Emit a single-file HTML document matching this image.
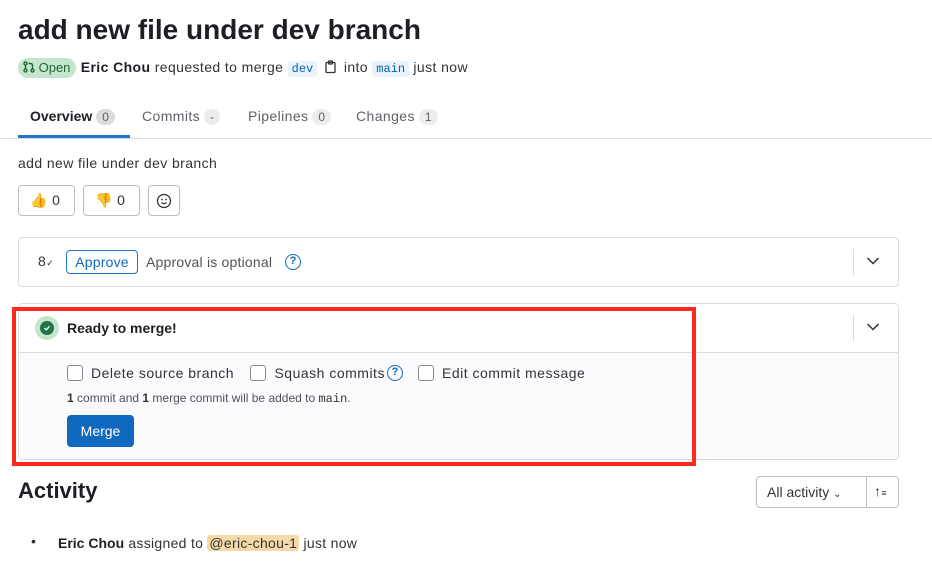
<!DOCTYPE html>
<html><head><meta charset="utf-8"><style>
*{box-sizing:border-box;margin:0;padding:0}
body{width:932px;height:570px;overflow:hidden;background:#fff;font-family:"Liberation Sans",sans-serif;color:#333238;position:relative;letter-spacing:0.4px}
.a{position:absolute}
.mono{font-family:"Liberation Mono",monospace;letter-spacing:0}
.badge{display:inline-block;background:#ececef;border-radius:10px;font-size:12px;padding:1px 6px;color:#626168;margin-left:4px;letter-spacing:0}
.cb{display:inline-block;width:16px;height:16px;border:1px solid #89888d;border-radius:3px;background:#fff;vertical-align:-3px;margin-right:8px}
.q{display:inline-block;width:16px;height:16px;border:1.5px solid #1068bf;border-radius:50%;color:#1068bf;font-size:11px;text-align:center;line-height:13px;font-weight:bold;letter-spacing:0}
</style></head><body>
<div class="a" style="left:18px;top:14px;font-size:28px;font-weight:bold;color:#1f1e24;letter-spacing:0">add new file under dev branch</div>
<div class="a" style="left:18px;top:57px;font-size:14px;white-space:nowrap;line-height:20px">
<span style="display:inline-block;background:#c3e6cd;color:#24663b;border-radius:10px;padding:0 6px 0 5px;font-size:13px;letter-spacing:0">
<svg width="12" height="12" viewBox="0 0 12 12" style="vertical-align:-1px"><g fill="none" stroke="#24663b" stroke-width="1.4"><circle cx="2.5" cy="2.5" r="1.5"/><circle cx="2.5" cy="9.5" r="1.5"/><circle cx="9.5" cy="9.5" r="1.5"/><path d="M2.5 4v4M9.5 8V4.5C9.5 3 8.5 2.5 7 2.5H5.5"/></g></svg> Open</span>
<b style="color:#1f1e24">Eric Chou</b> requested to merge <span class="mono" style="background:#e9f3fc;color:#0b5cad;font-size:12px;padding:1px 4px;border-radius:3px">dev</span>
<svg width="14" height="14" viewBox="0 0 14 14" style="vertical-align:-2px;margin:0 2px"><g fill="none" stroke="#333" stroke-width="1.3"><rect x="2" y="2.5" width="9" height="10" rx="1"/><rect x="4.5" y="1" width="4" height="3" rx="0.5"/></g></svg>
into <span class="mono" style="background:#e9f3fc;color:#0b5cad;font-size:12px;padding:1px 4px;border-radius:3px">main</span> just now</div>
<div class="a" style="left:0;top:138px;width:932px;height:1px;background:#dcdcde"></div>
<div class="a" style="left:18px;top:135px;width:112px;height:3px;background:#1f75cb"></div>
<div class="a" style="left:30px;top:108px;font-size:14px;color:#1f1e24;font-weight:bold;letter-spacing:0">Overview<span class="badge" style="font-weight:normal;background:#dcdcde">0</span></div>
<div class="a" style="left:142px;top:108px;font-size:14px;color:#626168">Commits<span class="badge">-</span></div>
<div class="a" style="left:248px;top:108px;font-size:14px;color:#626168">Pipelines<span class="badge">0</span></div>
<div class="a" style="left:356px;top:108px;font-size:14px;color:#626168">Changes<span class="badge">1</span></div>
<div class="a" style="left:18px;top:155px;font-size:14px">add new file under dev branch</div>
<div class="a" style="left:18px;top:185px;width:57px;height:31px;border:1px solid #bfbfc3;border-radius:4px;font-size:14px;padding:6px 0 0 11px">👍 0</div>
<div class="a" style="left:83px;top:185px;width:57px;height:31px;border:1px solid #bfbfc3;border-radius:4px;font-size:14px;padding:6px 0 0 11px">👎 0</div>
<div class="a" style="left:148px;top:185px;width:32px;height:31px;border:1px solid #bfbfc3;border-radius:4px">
<svg class="a" style="left:7px;top:7px" width="16" height="16" viewBox="0 0 16 16"><g fill="none" stroke="#333" stroke-width="1.3"><circle cx="8" cy="8" r="6.5"/><path d="M5.5 9.5c1.3 1.5 3.7 1.5 5 0"/></g><circle cx="6" cy="6.5" r="0.9" fill="#333"/><circle cx="10" cy="6.5" r="0.9" fill="#333"/></svg></div>
<div class="a" style="left:18px;top:237px;width:881px;height:50px;border:1px solid #dcdcde;border-radius:4px"></div>
<div class="a" style="left:38px;top:253px;font-size:14px">8<span style="font-size:9px">✓</span></div>
<div class="a" style="left:66px;top:250px;width:72px;height:24px;border:1px solid #1f75cb;border-radius:4px;color:#1068bf;font-size:14px;text-align:center;line-height:22px;letter-spacing:0.2px">Approve</div>
<div class="a" style="left:146px;top:254px;font-size:14px;color:#535158;letter-spacing:0.2px">Approval is optional</div>
<div class="a q" style="left:285px;top:254px">?</div>
<div class="a" style="left:853px;top:249px;width:1px;height:26px;background:#dcdcde"></div>
<svg class="a" style="left:866px;top:256px" width="14" height="10" viewBox="0 0 14 10"><path d="M1.5 2l5.5 5.5L12.5 2" fill="none" stroke="#333" stroke-width="1.5"/></svg>
<div class="a" style="left:18px;top:303px;width:881px;height:157px;border:1px solid #dcdcde;border-radius:4px;overflow:hidden">
<div class="a" style="left:0;top:48px;width:881px;height:109px;background:#fbfafd;border-top:1px solid #dcdcde"></div></div>
<div class="a" style="left:35px;top:316px;width:24px;height:24px;border-radius:50%;background:#c3e6cd"></div>
<div class="a" style="left:40px;top:321px;width:14px;height:14px;border-radius:50%;background:#217645"></div>
<svg class="a" style="left:43px;top:324px" width="8" height="8" viewBox="0 0 8 8"><path d="M1.5 4l1.8 1.8L6.5 2.3" fill="none" stroke="#fff" stroke-width="1.3"/></svg>
<div class="a" style="left:67px;top:320px;font-size:14px;font-weight:bold;color:#1f1e24;letter-spacing:0">Ready to merge!</div>
<div class="a" style="left:853px;top:315px;width:1px;height:26px;background:#dcdcde"></div>
<svg class="a" style="left:866px;top:322px" width="14" height="10" viewBox="0 0 14 10"><path d="M1.5 2l5.5 5.5L12.5 2" fill="none" stroke="#333" stroke-width="1.5"/></svg>
<div class="a" style="left:67px;top:365px;font-size:14px;white-space:nowrap;letter-spacing:0.5px"><span class="cb"></span>Delete source branch <span class="cb" style="margin-left:12px"></span>Squash commits</div>
<div class="a q" style="left:387px;top:365px">?</div>
<div class="a" style="left:418px;top:365px;font-size:14px;white-space:nowrap;letter-spacing:0.5px"><span class="cb"></span>Edit commit message</div>
<div class="a" style="left:67px;top:391px;font-size:12px;color:#535158;letter-spacing:0"><b style="color:#333">1</b> commit and <b style="color:#333">1</b> merge commit will be added to <span class="mono" style="color:#333">main</span>.</div>
<div class="a" style="left:67px;top:415px;width:67px;height:32px;background:#1068bf;border-radius:4px;color:#fff;font-size:14px;text-align:center;line-height:32px;letter-spacing:0">Merge</div>
<div class="a" style="left:12px;top:307px;width:684px;height:159px;border:4px solid #ff2a1f"></div>
<div class="a" style="left:18px;top:478px;font-size:22px;font-weight:bold;color:#1f1e24;letter-spacing:0">Activity</div>
<div class="a" style="left:756px;top:476px;width:143px;height:32px;border:1px solid #bfbfc3;border-radius:4px"></div>
<div class="a" style="left:866px;top:476px;width:1px;height:32px;background:#bfbfc3"></div>
<div class="a" style="left:767px;top:484px;font-size:14px;letter-spacing:0">All activity <span style="font-size:10px">⌄</span></div>
<div class="a" style="left:874px;top:483px;font-size:14px">↑<span style="font-size:9px">≡</span></div>
<div class="a" style="left:31px;top:533px;font-size:14px">•</div>
<div class="a" style="left:58px;top:535px;font-size:14px;letter-spacing:0.3px"><b style="color:#1f1e24;letter-spacing:0">Eric Chou</b> assigned to <span style="background:#f5d9a8;color:#333;padding:0 2px;border-radius:3px">@eric-chou-1</span> just now</div>
</body></html>
